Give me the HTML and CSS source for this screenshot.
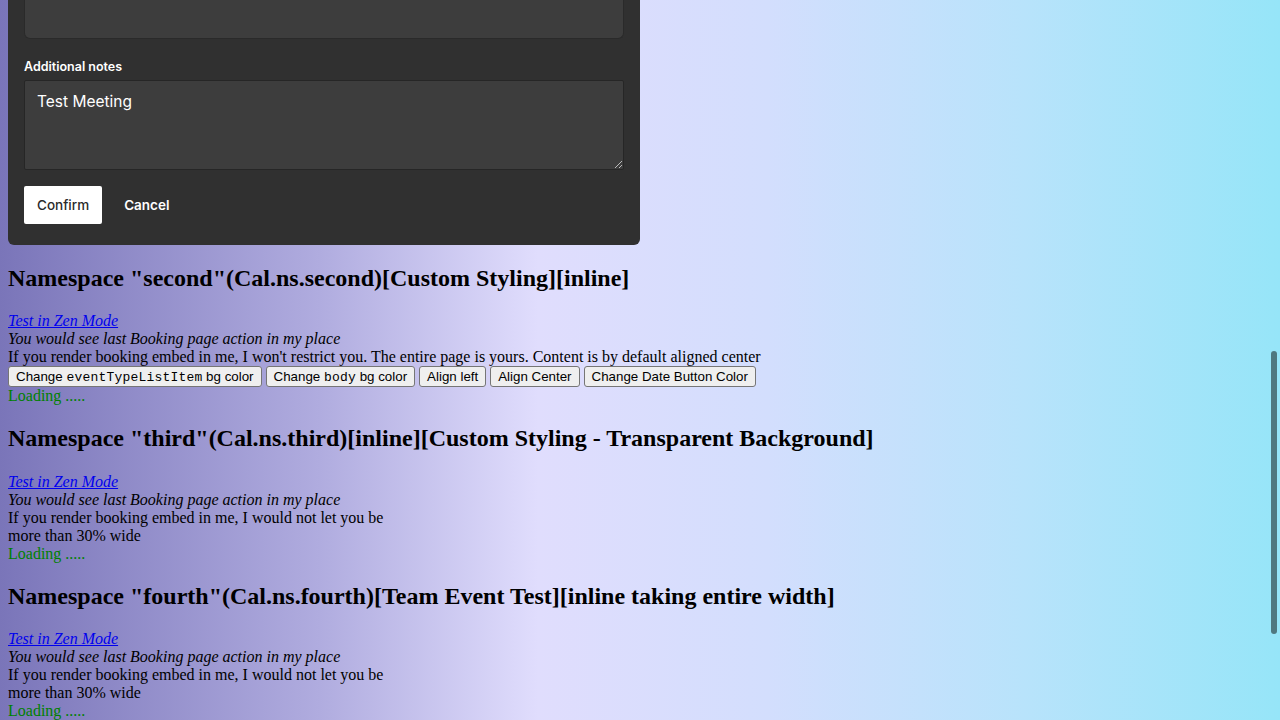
FILE: index.html
```html
<!DOCTYPE html>
<html lang="en">
<head>
<meta charset="utf-8">
<title>Embed Playground</title>
<link rel="stylesheet" href="styles.css">
</head>
<body>
<div class="page">
  <div class="booking-card">
    <div class="field-input"></div>
    <label class="field-label">Additional notes</label>
    <div class="field-textarea">Test Meeting<span class="resize-grip"></span></div>
    <div class="actions">
      <button class="btn-confirm">Confirm</button>
      <button class="btn-cancel">Cancel</button>
    </div>
  </div>

  <section class="ns">
    <h2 class="ns-title">Namespace "second"(Cal.ns.second)[Custom Styling][inline]</h2>
    <a class="zen-link" href="#">Test in Zen Mode</a>
    <div class="note">You would see last Booking page action in my place</div>
    <div class="desc">If you render booking embed in me, I won't restrict you. The entire page is yours. Content is by default aligned center</div>
    <div class="controls">
      <button class="ctl">Change <code>eventTypeListItem</code> bg color</button>
      <button class="ctl">Change <code>body</code> bg color</button>
      <button class="ctl">Align left</button>
      <button class="ctl">Align Center</button>
      <button class="ctl">Change Date Button Color</button>
    </div>
    <div class="loading">Loading .....</div>
  </section>

  <section class="ns">
    <h2 class="ns-title">Namespace "third"(Cal.ns.third)[inline][Custom Styling - Transparent Background]</h2>
    <a class="zen-link" href="#">Test in Zen Mode</a>
    <div class="note">You would see last Booking page action in my place</div>
    <div class="desc narrow">If you render booking embed in me, I would not let you be more than 30% wide</div>
    <div class="loading">Loading .....</div>
  </section>

  <section class="ns">
    <h2 class="ns-title">Namespace "fourth"(Cal.ns.fourth)[Team Event Test][inline taking entire width]</h2>
    <a class="zen-link" href="#">Test in Zen Mode</a>
    <div class="note">You would see last Booking page action in my place</div>
    <div class="desc narrow">If you render booking embed in me, I would not let you be more than 30% wide</div>
    <div class="loading">Loading .....</div>
  </section>
</div>
<div class="scroll-thumb"></div>
</body>
</html>
```

FILE: styles.css
```css
html, body {
  height: 100%;
}
body {
  margin: 0;
  overflow: hidden;
  background: linear-gradient(90deg, #7a75b9 0%, #b0acdf 25%, #e0ddfd 42%, #d3defd 60%, #b8e3fb 80%, #96e5f8 100%);
  font-family: "Liberation Serif", "Times New Roman", serif;
  font-size: 16px;
  color: #000;
}
.page {
  padding: 0 8px;
  margin-top: -30px;
}
.booking-card {
  width: 632px;
  box-sizing: border-box;
  background: #303030;
  border-radius: 6px;
  padding: 0 16px 21px;
  font-family: Inter, "Liberation Sans", Arial, sans-serif;
  display: flex;
  flex-direction: column;
}
.field-input {
  height: 69px;
  background: #3d3d3d;
  border: 1px solid #2a2a2a;
  border-top: none;
  border-radius: 0 0 6px 6px;
  box-sizing: border-box;
}
.field-label {
  margin-top: 20px;
  font-size: 12.5px;
  font-weight: 600;
  color: #ffffff;
  line-height: 16px;
}
.field-textarea {
  position: relative;
  margin-top: 5px;
  height: 90px;
  box-sizing: border-box;
  background: #3d3d3d;
  border: 1px solid #262626;
  border-radius: 2px;
  padding: 11px 12px 9px;
  color: #ffffff;
  font-size: 15.5px;
  line-height: 20px;
}
.resize-grip {
  position: absolute;
  right: 1px;
  bottom: 1px;
  width: 7px;
  height: 7px;
  background: linear-gradient(135deg, transparent 45%, #bbb 45%, #bbb 55%, transparent 55%, transparent 72%, #bbb 72%, #bbb 82%, transparent 82%);
}
.actions {
  margin-top: 16px;
  display: flex;
  align-items: center;
  gap: 9px;
}
.btn-confirm {
  height: 38px;
  padding: 0 13px;
  background: #ffffff;
  color: #2b2b2b;
  border: none;
  border-radius: 2px;
  font-family: Inter, "Liberation Sans", Arial, sans-serif;
  font-size: 13.5px;
  font-weight: 500;
}
.btn-cancel {
  height: 38px;
  padding: 0 13px;
  background: transparent;
  color: #ffffff;
  border: none;
  font-family: Inter, "Liberation Sans", Arial, sans-serif;
  font-size: 13.5px;
  font-weight: 600;
}
.ns-title {
  font-size: 24px;
  font-weight: bold;
  margin: 19.92px 0;
  line-height: 27.6px;
}
.zen-link {
  display: block;
  width: max-content;
  color: #0000ee;
  font-style: italic;
  line-height: 18px;
}
.note {
  font-style: italic;
  line-height: 18px;
}
.desc {
  line-height: 18px;
}
.desc.narrow {
  width: 30%;
}
.controls {
  display: flex;
  gap: 4px;
  padding: 0;
}
.ctl {
  font-family: "Liberation Sans", Arial, sans-serif;
  font-size: 13.33px;
  height: 21px;
  padding: 1px 7px;
  background: #efefef;
  color: #000;
  border: 1px solid #767676;
  border-radius: 3px;
  line-height: 15px;
}
.ctl code {
  font-family: "Liberation Mono", "Courier New", monospace;
  font-size: 13px;
  letter-spacing: 0.2px;
}
.loading {
  color: #008000;
  line-height: 18px;
}
.scroll-thumb {
  position: fixed;
  right: 3px;
  top: 351px;
  width: 6px;
  height: 283px;
  border-radius: 3px;
  background: #4f7880;
}
```
